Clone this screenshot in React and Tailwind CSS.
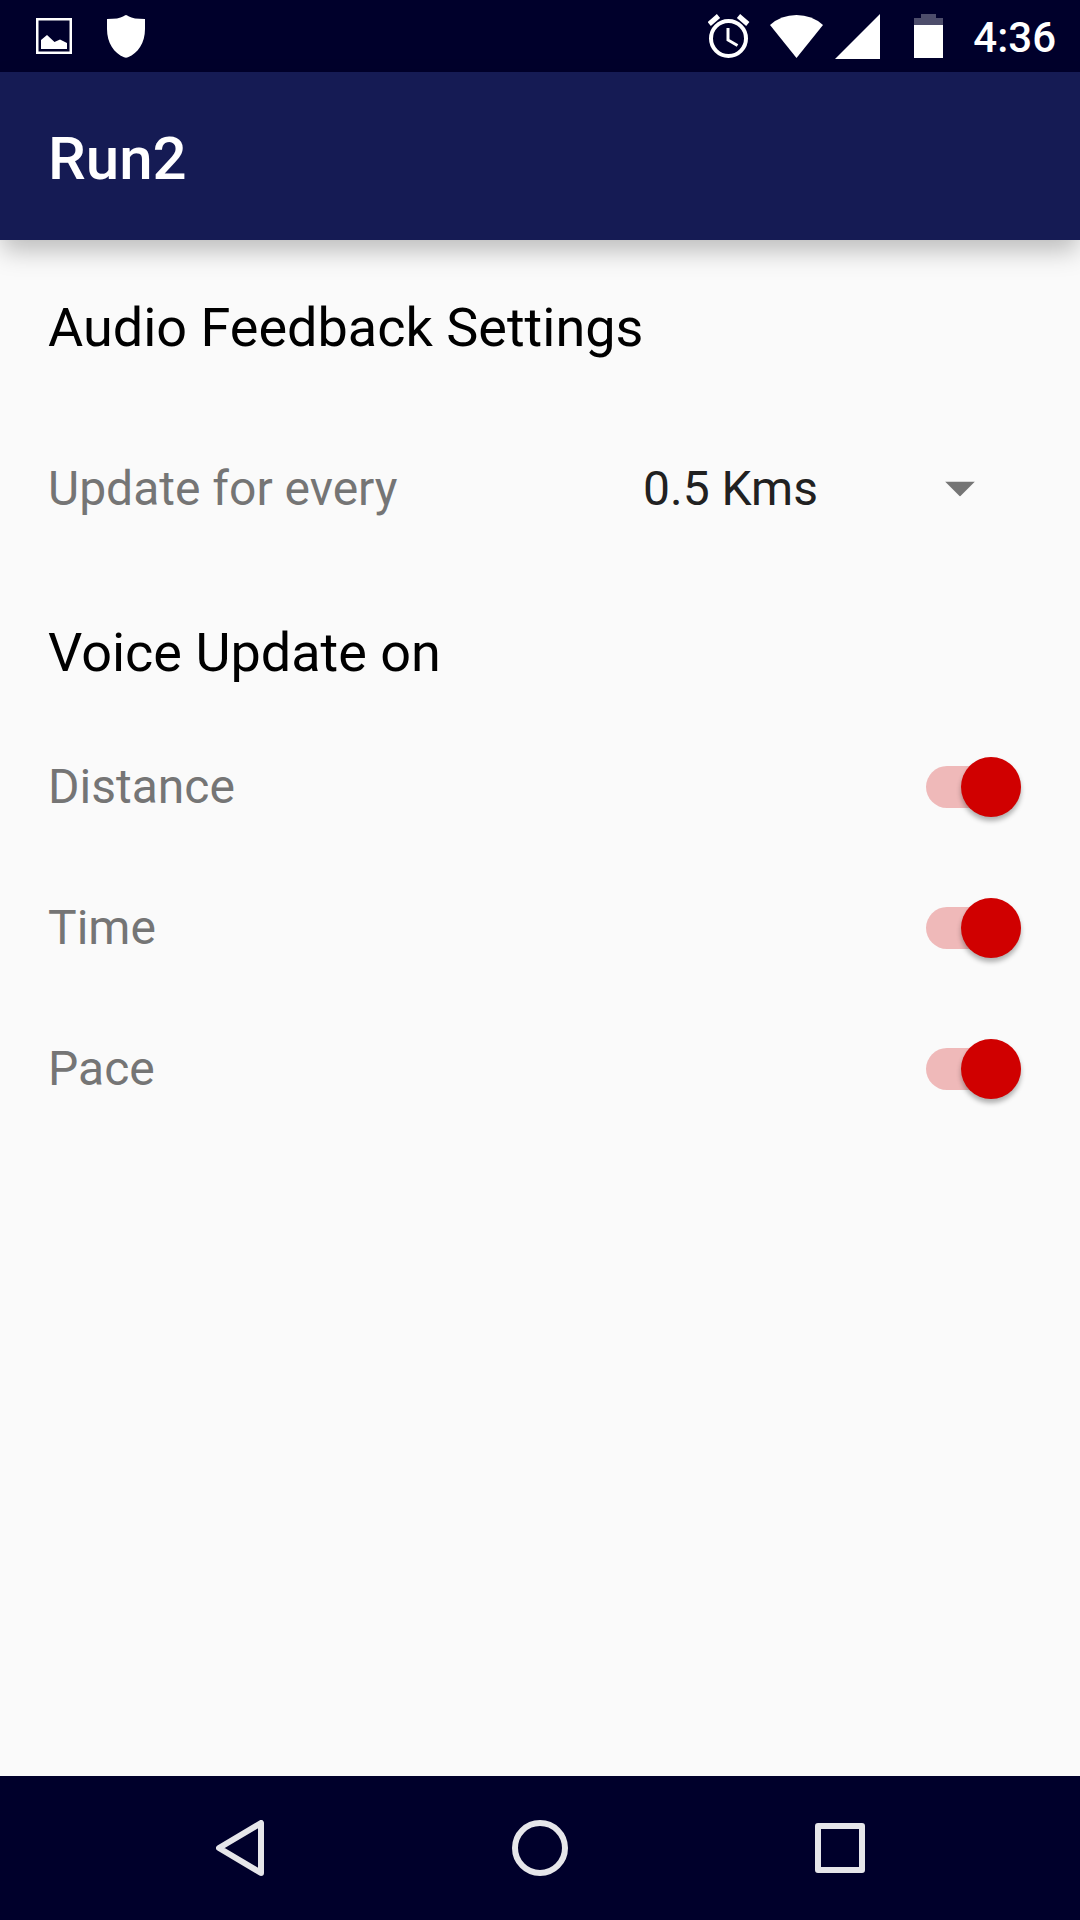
import { useState } from 'react'

function StatusBar() {
  return (
    <div className="flex h-18 items-center justify-between bg-[#00002b] pl-9 pr-6 text-white">
      <div className="flex items-center gap-[35px]">
        <svg width="36" height="36" viewBox="0 0 36 36" aria-hidden="true">
          <rect x="1.25" y="1.25" width="33.5" height="33.5" fill="none" stroke="currentColor" strokeWidth="2.5" />
          <path d="M5 31V22L11 17L18.500 24L24 21.500L31 25V31Z" fill="currentColor" />
        </svg>
        <svg width="38" height="43" viewBox="0 0 38 43" fill="currentColor" aria-hidden="true">
          <path d="M19 0Q20 0 22 1.500Q26 4 38 4V14C38 28 31 38 21 42.300Q19 43 17 42.300C7 38 0 28 0 14V4Q12 4 16 1.500Q18 0 19 0Z" />
        </svg>
      </div>
      <div className="flex items-center">
        <svg width="42" height="44" viewBox="0 0 42 44" fill="none" stroke="currentColor" aria-hidden="true">
          <circle cx="20.500" cy="24.500" r="17.500" strokeWidth="4" />
          <path d="M1.200 10L10.500 2M39.800 10L30.500 2" strokeWidth="5" />
          <path d="M20 14V26L29.500 31.500" strokeWidth="3" />
        </svg>
        <svg className="ml-5" width="53" height="43" viewBox="0 0 53 43" fill="currentColor" aria-hidden="true">
          <path d="M26.500 43L0 10Q11 0 26.500 0T53 10Z" />
        </svg>
        <svg className="ml-3" width="45" height="45" viewBox="0 0 45 45" fill="currentColor" aria-hidden="true">
          <path d="M45 0V45H0Z" />
        </svg>
        <svg className="ml-[34px]" width="29" height="44" viewBox="0 0 29 44" fill="currentColor" aria-hidden="true">
          <path d="M0 4H7V0H22V4H29V11H0Z" opacity="0.3" />
          <path d="M0 11H29V44H0Z" />
        </svg>
        <span className="ml-[30px] pt-[3px] text-[42px] leading-12 font-medium">4:36</span>
      </div>
    </div>
  )
}

function Switch({ label, checked, onChange }) {
  return (
    <label className="flex h-[141px] items-center justify-between pr-[11px] text-5xl text-[#757575]">
      {label}
      <input
        type="checkbox"
        role="switch"
        checked={checked}
        onChange={(e) => onChange(e.target.checked)}
        className="flex h-[42px] w-[95px] appearance-none items-center rounded-full bg-[#b9b9b9] before:size-15 before:shrink-0 before:rounded-full before:bg-[#f1f1f1] before:shadow-[0_4px_5px_rgba(0,0,0,0.3)] checked:justify-end checked:bg-[#efb9b9] checked:before:bg-[#d00000]"
      />
    </label>
  )
}

function NavBar() {
  return (
    <nav className="flex h-36 bg-[#00002b] px-[90px] text-[#e6e6ea]">
      <button aria-label="Back" className="flex flex-1 items-center justify-center">
        <svg width="48" height="56" viewBox="0 0 48 56" fill="none" stroke="currentColor" strokeWidth="6" strokeLinejoin="round">
          <path d="M45 3V53L3 28Z" />
        </svg>
      </button>
      <button aria-label="Home" className="flex flex-1 items-center justify-center">
        <svg width="56" height="56" viewBox="0 0 56 56" fill="none" stroke="currentColor" strokeWidth="6">
          <circle cx="28" cy="28" r="25" />
        </svg>
      </button>
      <button aria-label="Recent apps" className="flex flex-1 items-center justify-center">
        <svg width="50" height="50" viewBox="0 0 50 50" fill="none" stroke="currentColor" strokeWidth="6" strokeLinejoin="round">
          <rect x="3" y="3" width="44" height="44" />
        </svg>
      </button>
    </nav>
  )
}

export default function App() {
  const [interval, setInterval] = useState('0.5')
  const [updates, setUpdates] = useState({ Distance: true, Time: true, Pace: true })

  return (
    <div className="flex min-h-screen flex-col bg-[#fafafa] font-[Roboto,sans-serif]">
      <StatusBar />
      <header className="flex h-42 items-center bg-[#151b54] px-12 pt-1.5 shadow-[0_12px_24px_-2px_rgba(0,0,0,0.26)]">
        <h1 className="text-6xl font-medium text-white">Run2</h1>
      </header>

      <main className="flex-1 px-12 pt-14">
        <h2 className="text-[54px] leading-16 text-black">Audio Feedback Settings</h2>
        <div className="mt-20 flex h-[98px] items-center justify-between text-5xl">
          <label htmlFor="interval" className="text-[#757575]">Update for every</label>
          <div className="relative w-[389px]">
            <select
              id="interval"
              value={interval}
              onChange={(e) => setInterval(e.target.value)}
              className="w-full appearance-none bg-transparent leading-14 text-[#212121]"
            >
              <option value="0.5">0.5 Kms</option>
              <option value="1">1 Kms</option>
              <option value="2">2 Kms</option>
            </select>
            <svg
              className="pointer-events-none absolute right-[57px] top-1/2 -translate-y-1/2"
              width="30"
              height="15"
              viewBox="0 0 30 15"
              aria-hidden="true"
            >
              <path d="M0 0H30L15 15Z" fill="#757575" />
            </svg>
          </div>
        </div>

        <h2 className="mt-[83px] mb-[31px] text-[54px] leading-16 text-black">Voice Update on</h2>
        {Object.keys(updates).map((name) => (
          <Switch
            key={name}
            label={name}
            checked={updates[name]}
            onChange={(on) => setUpdates({ ...updates, [name]: on })}
          />
        ))}
      </main>

      <NavBar />
    </div>
  )
}
